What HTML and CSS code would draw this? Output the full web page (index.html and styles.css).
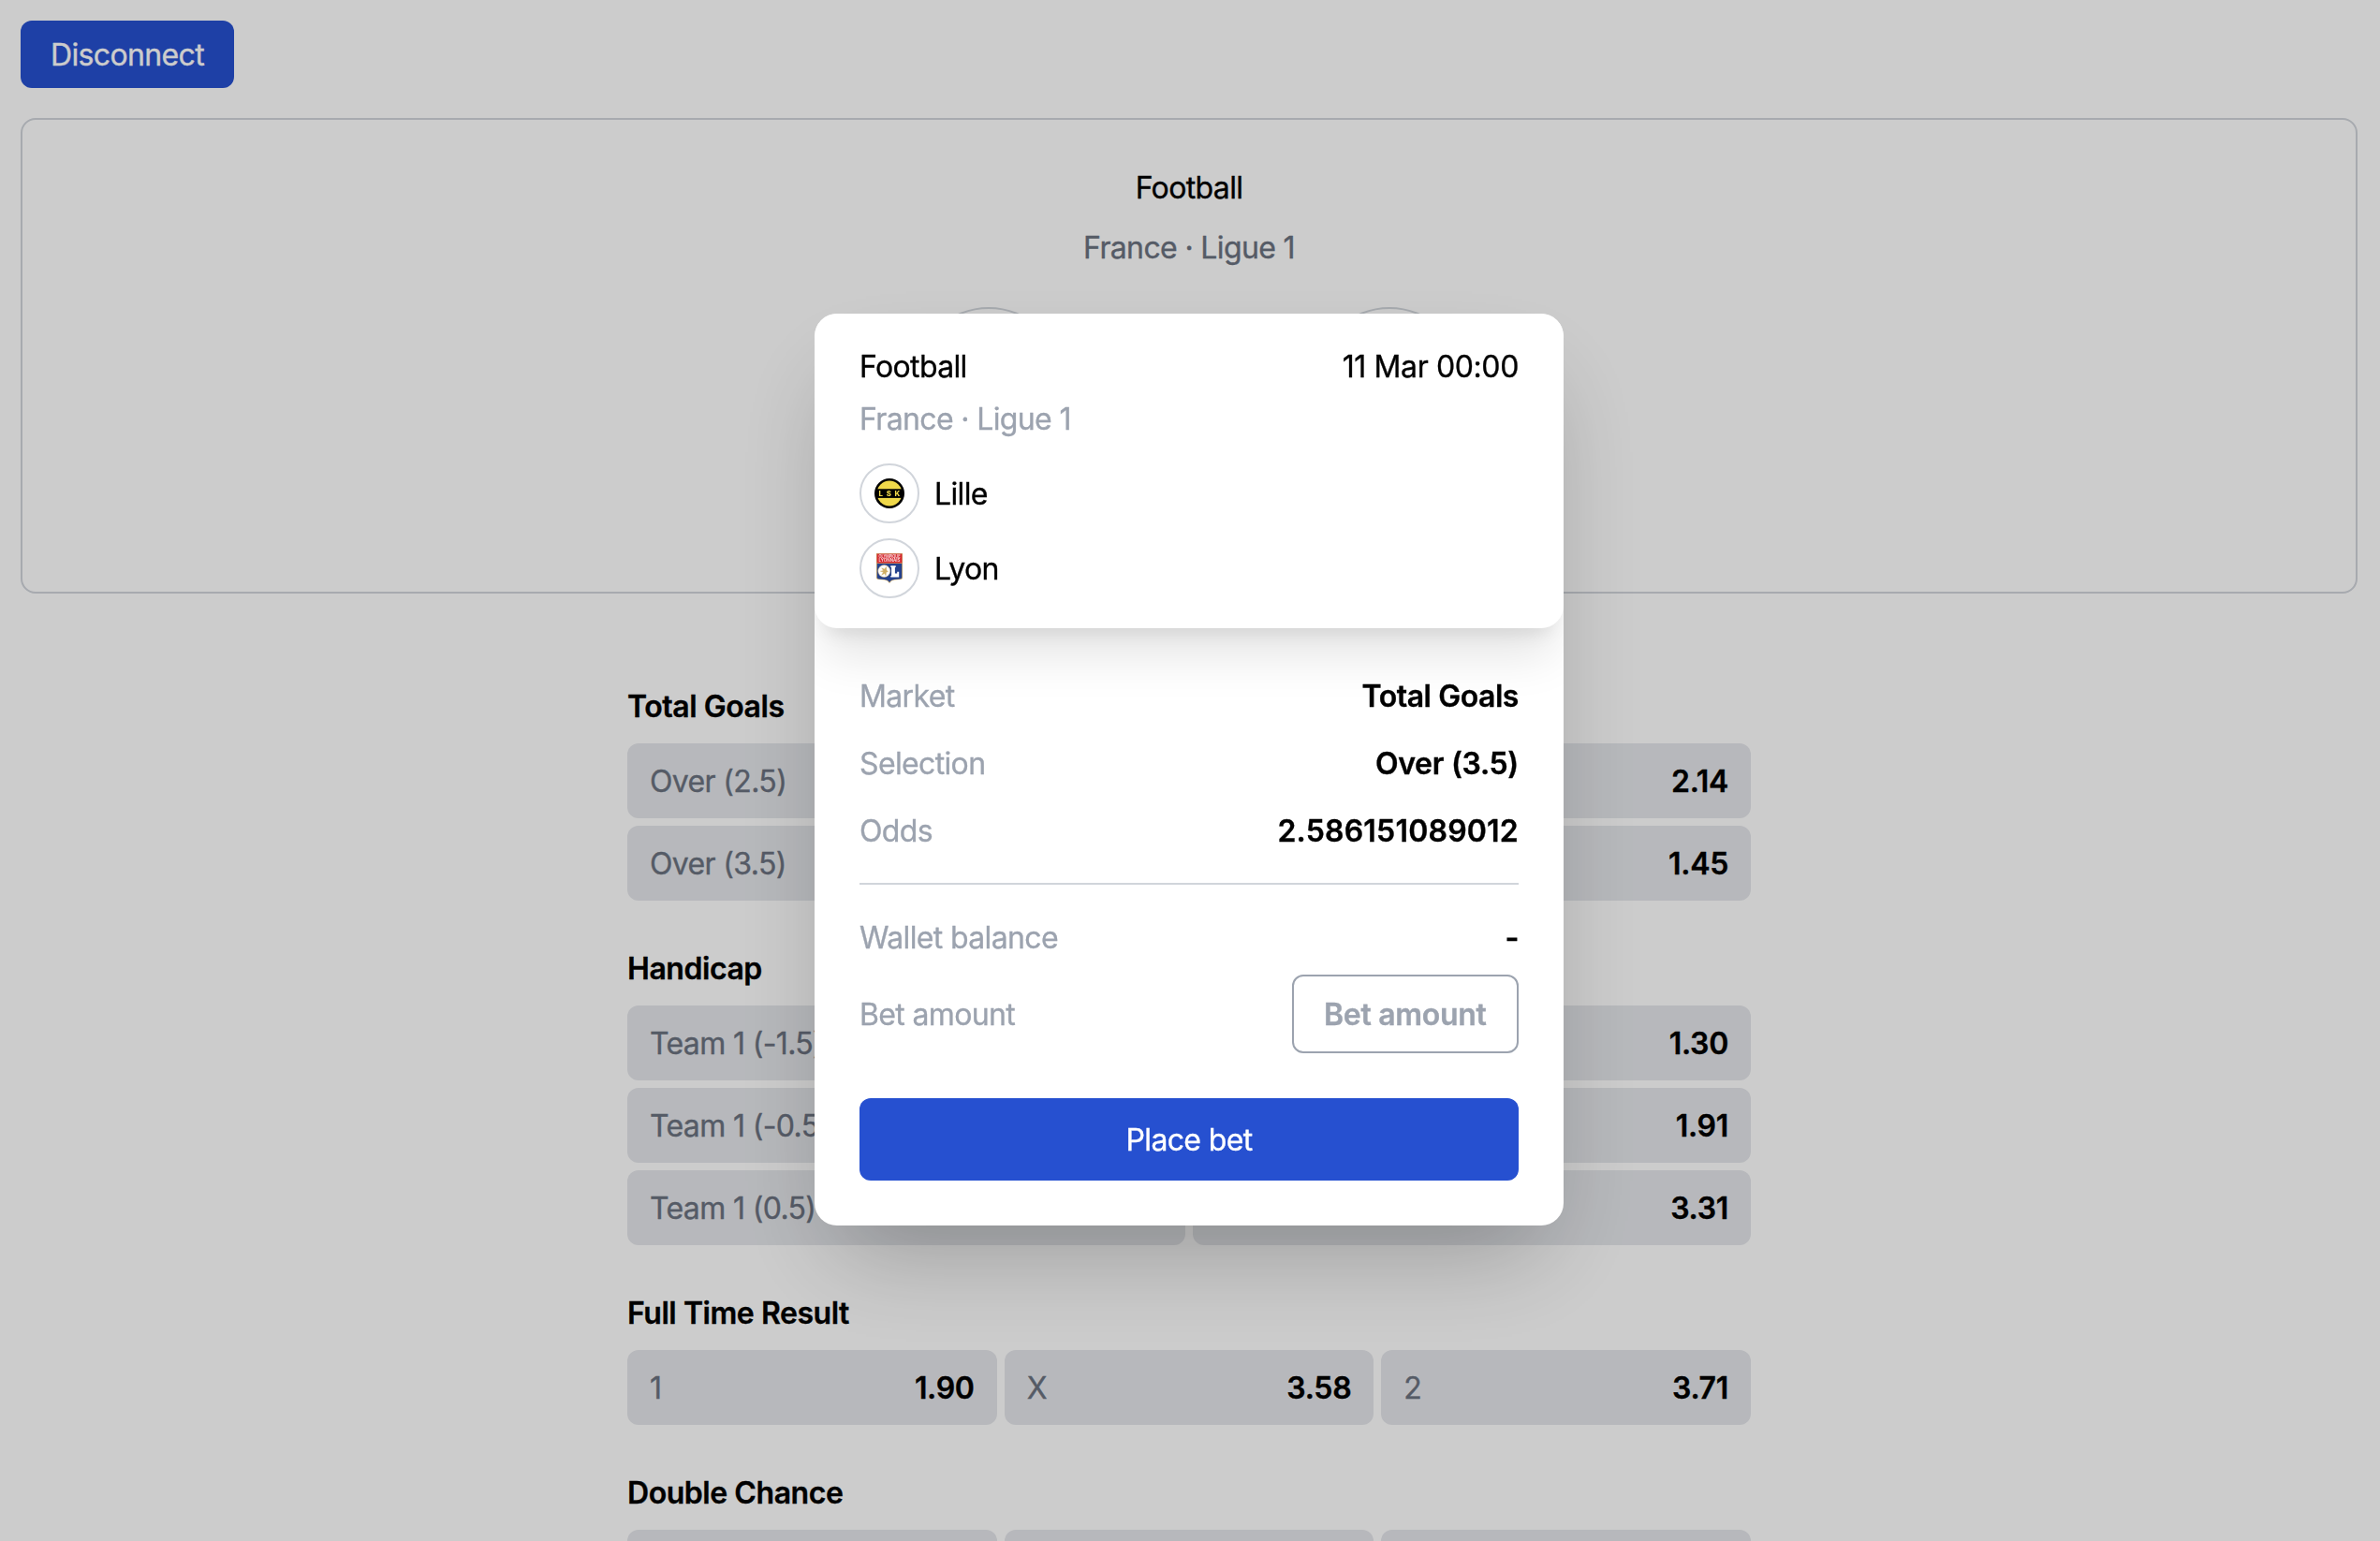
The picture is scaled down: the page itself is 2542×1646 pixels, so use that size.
FILE: index.html
```
<!DOCTYPE html>
<html lang="en">
<head>
<meta charset="utf-8">
<title>France · Ligue 1</title>
<link rel="stylesheet" href="styles.css">
</head>
<body>
<div class="page">
  <button class="btn">Disconnect</button>
  <section class="game">
    <div class="line">Football</div>
    <div class="line game-league">France · Ligue 1</div>
    <div class="game-teams">
      <span class="game-logo"></span>
      <span class="game-logo"></span>
    </div>
  </section>

  <main class="markets">
    <section class="market">
      <h2 class="line market-title">Total Goals</h2>
      <div class="outcomes two">
        <div class="outcome"><span>Over (2.5)</span><b></b></div>
        <div class="outcome"><span></span><b>2.14</b></div>
        <div class="outcome"><span>Over (3.5)</span><b></b></div>
        <div class="outcome"><span></span><b>1.45</b></div>
      </div>
    </section>
    <section class="market">
      <h2 class="line market-title">Handicap</h2>
      <div class="outcomes two">
        <div class="outcome"><span>Team 1 (-1.5)</span><b></b></div>
        <div class="outcome"><span></span><b>1.30</b></div>
        <div class="outcome"><span>Team 1 (-0.5)</span><b></b></div>
        <div class="outcome"><span></span><b>1.91</b></div>
        <div class="outcome"><span>Team 1 (0.5)</span><b></b></div>
        <div class="outcome"><span></span><b>3.31</b></div>
      </div>
    </section>
    <section class="market">
      <h2 class="line market-title">Full Time Result</h2>
      <div class="outcomes three">
        <div class="outcome"><span>1</span><b>1.90</b></div>
        <div class="outcome"><span>X</span><b>3.58</b></div>
        <div class="outcome"><span>2</span><b>3.71</b></div>
      </div>
    </section>
    <section class="market">
      <h2 class="line market-title">Double Chance</h2>
      <div class="outcomes three">
        <div class="outcome"></div>
        <div class="outcome"></div>
        <div class="outcome"></div>
      </div>
    </section>
  </main>
</div>

<div class="overlay">
  <div class="modal">
    <header class="modal-head">
      <div class="row"><span>Football</span><time class="date">11 Mar 00:00</time></div>
      <div class="line modal-league">France · Ligue 1</div>
      <div class="teams">
        <div class="team">
          <span class="team-logo">
            <svg width="32" height="32" viewBox="0 0 32 32">
              <circle cx="16" cy="16" r="16" fill="#000"/>
              <circle cx="16" cy="16" r="13.4" fill="#f0d94a"/>
              <rect x="2" y="11.300" width="28" height="9.600" fill="#000"/>
              <text x="6.7" y="18.800" class="crest-lsk" text-anchor="middle">L</text>
              <text x="15.3" y="18.800" class="crest-lsk" text-anchor="middle">S</text>
              <text x="24.3" y="18.800" class="crest-lsk" text-anchor="middle">K</text>
            </svg>
          </span>
          <span class="line">Lille</span>
        </div>
        <div class="team">
          <span class="team-logo">
            <svg width="32" height="32" viewBox="0 0 32 32">
              <path d="M2 0h28v26.500q-.5 1.500-3 1.600-7 .4-9 1.600L16 32l-2-2.300q-2-1.200-9-1.600-2.500-.1-3-1.600z" fill="#c9a96a"/>
              <path d="M2.600.6h26.800v9.800H2.600z" fill="#d62a32"/>
              <path d="M2.800 11h26.400v15.300q-.4 1-2.400 1.100-7 .3-9 1.600L16 30.900l-1.800-1.900q-2-1.300-9-1.600-2-.1-2.400-1.100z" fill="#24418e"/>
              <text x="16" y="4.900" class="crest-ol" text-anchor="middle" textLength="23" lengthAdjust="spacingAndGlyphs">OLYMPIQUE</text>
              <text x="16" y="9.200" class="crest-ol" text-anchor="middle" textLength="23" lengthAdjust="spacingAndGlyphs">LYONNAIS</text>
              <circle cx="10.300" cy="19" r="6.500" fill="#fff" stroke="#c9a96a" stroke-width=".5"/>
              <path d="M12.500 14.500l-1.800 2.500-3-1.200 1.800 2.600-3.200.8 3.200.8-1.800 3.200 3-1.600 1.400 2.200.4-3.600 2-.6-1.600-1.400z" fill="#d0ad62" stroke="#d0ad62" stroke-width=".4"/>
              <path d="M17.300 13.300h5.400v1.600h-.8v6.700h2.300v-1.800h2v5.700h-8.900v-1.600h.8v-9h-.8z" fill="#fff"/>
            </svg>
          </span>
          <span class="line">Lyon</span>
        </div>
      </div>
    </header>
    <div class="modal-body">
      <div class="facts">
        <div class="row"><span class="label">Market</span><b>Total Goals</b></div>
        <div class="row"><span class="label">Selection</span><b class="pick">Over (3.5)</b></div>
        <div class="row"><span class="label">Odds</span><b class="num">2.586151089012</b></div>
      </div>
      <div class="stake">
        <div class="row"><span class="label">Wallet balance</span><b>-</b></div>
        <div class="row"><span class="label">Bet amount</span><input class="amount" placeholder="Bet amount"></div>
      </div>
      <button class="btn place">Place bet</button>
    </div>
  </div>
</div>
</body>
</html>
```
FILE: styles.css
```
* { box-sizing: border-box; }

html, body { height: 100%; }

body {
  margin: 0;
  overflow: hidden;
  background: #fff;
  color: #000;
  font: 400 32px/49px Inter, "Liberation Sans", sans-serif;
  letter-spacing: -0.64px;
  -webkit-text-stroke-width: 0.35px;
}

b { font-weight: 600; letter-spacing: -0.45px; }

/* One line of text in the 48px rhythm */
.line,
.row > span,
.row > time,
.row > b,
.outcome > span,
.outcome > b { height: 48px; }

.page { padding: 22px 24px 0 22px; }

.btn {
  display: block;
  width: 228px;
  height: 72px;
  padding: 1px 0 0;
  border: 0;
  border-radius: 12px;
  background: #2650d0;
  color: #fff;
  font: inherit;
  letter-spacing: inherit;
}

.game {
  display: flex;
  flex-direction: column;
  align-items: center;
  gap: 16px;
  height: 508px;
  margin-top: 32px;
  padding-top: 48px;
  border: 2px solid #d1d5db;
  border-radius: 16px;
}

.game-league { color: #6b7280; }

.game-teams { display: flex; gap: 268px; margin-top: 24px; }

.game-logo {
  width: 160px;
  height: 160px;
  border: 2px solid #d1d5db;
  border-radius: 50%;
}

.markets {
  display: flex;
  flex-direction: column;
  gap: 48px;
  width: 1200px;
  margin: 96px auto 0;
}

.market-title {
  margin: 0 0 16px;
  font-size: 32px;
  font-weight: 600;
  letter-spacing: -0.45px;
}

.outcomes { display: grid; gap: 8px; }
.two { grid-template-columns: repeat(2, 1fr); }
.three { grid-template-columns: repeat(3, 1fr); }

.outcome {
  display: flex;
  align-items: center;
  justify-content: space-between;
  height: 80px;
  padding: 0 24px;
  border-radius: 12px;
  background: #e5e7eb;
  color: #6b7280;
}

.outcome b { color: #000; letter-spacing: -0.3px; }

.overlay {
  position: fixed;
  inset: 0;
  display: flex;
  align-items: center;
  justify-content: center;
  padding: 0 2px 2px 0;
  background: rgba(0, 0, 0, 0.2);
}

.modal {
  width: 800px;
  overflow: hidden;
  border-radius: 24px;
  background: #fff;
  box-shadow: 0 50px 100px -24px rgba(0, 0, 0, 0.25);
}

.modal-head {
  padding: 32px 48px;
  border-radius: 24px;
  background: #fff;
  box-shadow: 0 40px 50px -10px rgba(0, 0, 0, 0.1), 0 16px 20px -12px rgba(0, 0, 0, 0.1);
}

.row { display: flex; align-items: center; justify-content: space-between; }

.date { letter-spacing: -0.38px; }

.modal-league { margin-top: 8px; color: #9ca3af; }

.teams { display: grid; gap: 16px; margin-top: 24px; }

.team { display: flex; align-items: center; gap: 16px; }

.team-logo {
  display: flex;
  align-items: center;
  justify-content: center;
  width: 64px;
  height: 64px;
  border: 2px solid #d1d5db;
  border-radius: 50%;
}

.crest-lsk { font: 800 7.8px Inter, sans-serif; letter-spacing: 0; fill: #f0d94a; -webkit-text-stroke-width: 0; }
.crest-ol { font: 600 4.2px Inter, sans-serif; letter-spacing: 0; fill: #fff; fill-opacity: .85; -webkit-text-stroke-width: 0; }

.modal-body { padding: 48px; }

.facts { display: grid; gap: 24px; padding-bottom: 32px; border-bottom: 2px solid #d1d5db; }

.label { color: #9ca3af; }

.pick { letter-spacing: -0.3px; }

.num { letter-spacing: 0.2px; }

.stake { display: grid; gap: 16px; margin-top: 32px; }

.amount {
  width: 242px;
  height: 84px;
  padding: 0 32px;
  border: 2px solid #9ca3af;
  border-radius: 12px;
  background: #fff;
  color: #000;
  font: 600 32px/48px Inter, "Liberation Sans", sans-serif;
  letter-spacing: -0.3px;
}

.amount::placeholder { color: #9ca3af; opacity: 1; }

.place { width: 100%; height: 88px; margin-top: 48px; }
```
